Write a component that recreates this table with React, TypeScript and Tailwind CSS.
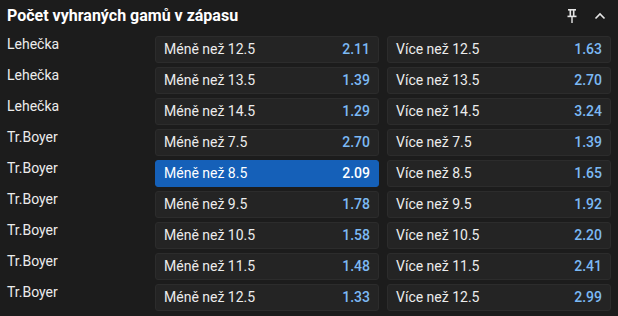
const rows = [
  { name: 'Lehečka', under: '12.5', uo: '2.11', over: '12.5', oo: '1.63' },
  { name: 'Lehečka', under: '13.5', uo: '1.39', over: '13.5', oo: '2.70' },
  { name: 'Lehečka', under: '14.5', uo: '1.29', over: '14.5', oo: '3.24' },
  { name: 'Tr.Boyer', under: '7.5', uo: '2.70', over: '7.5', oo: '1.39' },
  { name: 'Tr.Boyer', under: '8.5', uo: '2.09', over: '8.5', oo: '1.65', active: true },
  { name: 'Tr.Boyer', under: '9.5', uo: '1.78', over: '9.5', oo: '1.92' },
  { name: 'Tr.Boyer', under: '10.5', uo: '1.58', over: '10.5', oo: '2.20' },
  { name: 'Tr.Boyer', under: '11.5', uo: '1.48', over: '11.5', oo: '2.41' },
  { name: 'Tr.Boyer', under: '12.5', uo: '1.33', over: '12.5', oo: '2.99' },
];

const Odd = ({ label, odd, active }: { label: string; odd: string; active?: boolean }) => (
  <button
    className={
      'flex h-[27px] items-center justify-between rounded-[3px] border px-[8px] text-[14px] ' +
      (active ? 'border-[#1560b8] bg-[#1560b8] text-white' : 'border-[#2c2c2c] bg-[#242424] text-[#ececec]')
    }
  >
    <span>{label}</span>
    <span className={'font-medium ' + (active ? 'text-white' : 'text-[#7cb9f4]')}>{odd}</span>
  </button>
);

export default function App() {
  return (
    <div className="h-[316px] w-[618px] bg-[#1c1c1c] font-['Roboto',sans-serif] text-[#ececec]">
      <div className="flex h-[32px] items-center justify-between pl-[7px] pr-[12px]">
        <h2 className="text-[16px] font-bold text-white">Počet vyhraných gamů v zápasu</h2>
        <div className="flex items-center gap-[17px]">
          <svg width="10" height="14" viewBox="0 0 10 14" fill="#e6e6e6">
            <rect x="1" y="0" width="8" height="1.6" />
            <rect x="2.5" y="1" width="1.6" height="6" />
            <rect x="5.9" y="1" width="1.6" height="6" />
            <rect x="0.5" y="6.6" width="9" height="1.6" />
            <rect x="4.3" y="8" width="1.4" height="6" />
          </svg>
          <svg width="12" height="8" viewBox="0 0 12 8" fill="none" stroke="#e6e6e6" strokeWidth="1.6">
            <path d="M1.5 6.5 6 2l4.5 4.5" />
          </svg>
        </div>
      </div>
      <div className="flex flex-col gap-[4px] pr-[7px] pt-[4px]">
        {rows.map((r, i) => (
          <div key={i} className="flex">
            <div className="w-[155px] pl-[7px] text-[14px] leading-[16px] text-[#ececec]">{r.name}</div>
            <div className="grid flex-1 grid-cols-2 gap-[8px]">
              <Odd label={'Méně než ' + r.under} odd={r.uo} active={r.active} />
              <Odd label={'Více než ' + r.over} odd={r.oo} />
            </div>
          </div>
        ))}
      </div>
    </div>
  );
}
